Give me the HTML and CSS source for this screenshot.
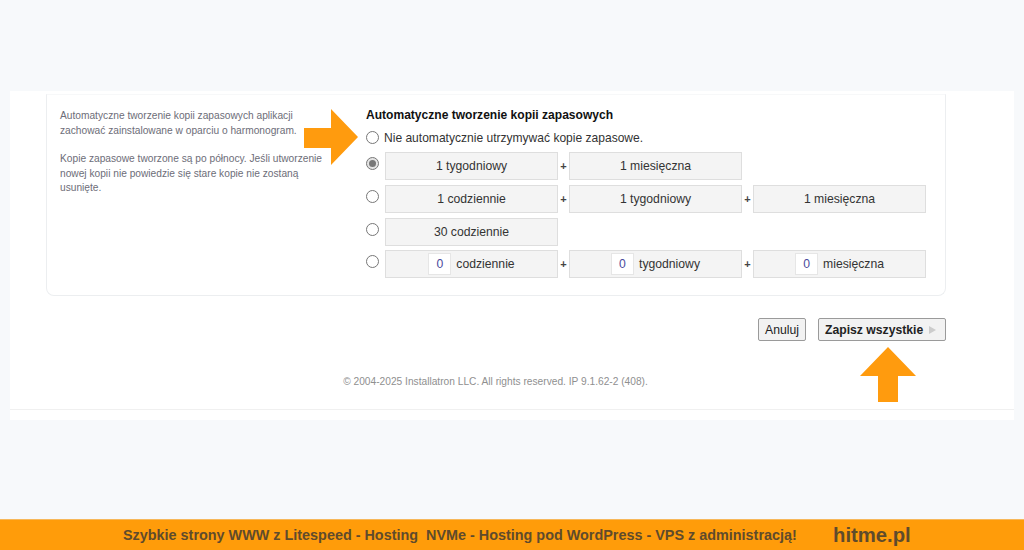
FILE: index.html
```html
<!DOCTYPE html>
<html lang="pl">
<head>
  <meta charset="UTF-8" />
  <meta name="viewport" content="width=device-width, initial-scale=1.0"/>
  <title>Automatyczne tworzenie kopii zapasowych</title>
  <link rel="stylesheet" href="styles.css">
</head>
<body>
  <div class="panel">
    <div class="card">
      <div class="help">
        <p>Automatyczne tworzenie kopii zapasowych aplikacji zachować zainstalowane w oparciu o harmonogram.</p>
        <p>Kopie zapasowe tworzone są po północy. Jeśli utworzenie nowej kopii nie powiedzie się stare kopie nie zostaną usunięte.</p>
      </div>
      <div class="options">
        <h2>Automatyczne tworzenie kopii zapasowych</h2>
        <label class="none-row"><span class="radio"></span> Nie automatycznie utrzymywać kopie zapasowe.</label>
        <div class="row">
          <span class="radio checked"></span>
          <div class="box">1 tygodniowy</div>
          <span class="plus">+</span>
          <div class="box">1 miesięczna</div>
        </div>
        <div class="row">
          <span class="radio"></span>
          <div class="box">1 codziennie</div>
          <span class="plus">+</span>
          <div class="box">1 tygodniowy</div>
          <span class="plus">+</span>
          <div class="box">1 miesięczna</div>
        </div>
        <div class="row">
          <span class="radio"></span>
          <div class="box">30 codziennie</div>
        </div>
        <div class="row">
          <span class="radio"></span>
          <div class="box"><span class="num">0</span> codziennie</div>
          <span class="plus">+</span>
          <div class="box"><span class="num">0</span> tygodniowy</div>
          <span class="plus">+</span>
          <div class="box"><span class="num">0</span> miesięczna</div>
        </div>
      </div>
    </div>
    <div class="actions">
      <button class="btn">Anuluj</button>
      <button class="btn save">Zapisz wszystkie <span class="tri"></span></button>
    </div>
    <div class="copy">© 2004-2025 Installatron LLC. All rights reserved. IP 9.1.62-2 (408).</div>
  </div>

  <!-- orange arrows drawn over the screenshot -->
  <svg class="arrow arrow-right" width="54" height="56" viewBox="0 0 54 56"><path d="M0 19H27V0L54 28 27 56V39H0Z" fill="#ff9b0e"/></svg>
  <svg class="arrow arrow-up" width="56" height="55" viewBox="0 0 56 55"><path d="M28 0 56 29H38V55H18V29H0Z" fill="#ff9b0e"/></svg>

  <div class="promo">
    <span class="promo-text">Szybkie strony WWW z Litespeed - Hosting&nbsp; NVMe - Hosting pod WordPress - VPS z administracją!</span>
    <span class="promo-brand">hitme.pl</span>
  </div>
</body>
</html>
```

FILE: styles.css
```css
html, body {
  margin: 0;
  height: 550px;
  overflow: hidden;
}
body {
  position: relative;
  display: flex;
  flex-direction: column;
  justify-content: space-between;
  background: #f7f9fb;
  font-family: "Liberation Sans", Arial, sans-serif;
  color: #222;
  padding-top: 91px;
  box-sizing: border-box;
}
.panel {
  margin: 0 10px;
  height: 329px;
  background: #fff;
  padding: 3px 68px 0 36px;
  box-sizing: border-box;
}
.card {
  height: 202px;
  border: 1px solid #eceef0;
  border-top-color: #f7f8f9;
  border-radius: 0 0 8px 8px;
  box-sizing: border-box;
  padding: 13px 13px 0 13px;
  display: flex;
}
.help {
  width: 306px;
  padding-top: 1px;
  font-size: 10.2px;
  line-height: 14.6px;
  color: #6d6d78;
}
.help p {
  margin: 0 0 14px;
  width: 270px;
}
.options h2 {
  margin: 0;
  font-size: 12.05px;
  line-height: 15px;
  color: #111;
}
.none-row {
  display: flex;
  align-items: center;
  gap: 5px;
  margin-top: 7px;
  font-size: 12.05px;
  height: 15px;
  color: #333;
}
.radio {
  flex: none;
  width: 11px;
  height: 11px;
  border: 1px solid #777;
  border-radius: 50%;
  background: #fff;
  position: relative;
}
.radio.checked {
  background: #e4e4e4;
}
.radio.checked::after {
  content: "";
  position: absolute;
  inset: 2px;
  border-radius: 50%;
  background: #777;
}
.row {
  display: flex;
  align-items: flex-start;
  margin-top: 5.8px;
  height: 27px;
}
.none-row + .row {
  margin-top: 7px;
}
.row .radio {
  margin: 5px 6px 0 0;
}
.box {
  width: 173px;
  height: 28px;
  box-sizing: border-box;
  background: #f4f4f4;
  border: 1px solid #dedede;
  display: flex;
  align-items: center;
  justify-content: center;
  gap: 5px;
  font-size: 12.2px;
  color: #333;
}
.plus {
  width: 11px;
  text-align: center;
  font-size: 11px;
  line-height: 28px;
  font-weight: bold;
  color: #444;
}
.num {
  width: 21px;
  height: 20px;
  line-height: 20px;
  text-align: center;
  background: #fff;
  border: 1px solid #e6e6e6;
  color: #4a4a9c;
}
.actions {
  display: flex;
  justify-content: flex-end;
  gap: 12px;
  margin-top: 22px;
}
.btn {
  height: 23px;
  padding: 0 6px;
  font-family: inherit;
  font-size: 12.2px;
  color: #222;
  background: #f2f2f2;
  border: 1px solid #9a9a9a;
  border-radius: 2px;
}
.save {
  width: 128px;
  font-weight: bold;
  font-size: 12.2px;
  text-align: left;
  display: flex;
  align-items: center;
  gap: 6px;
  white-space: nowrap;
}
.tri {
  width: 0;
  height: 0;
  border-left: 7px solid #ccc;
  border-top: 4px solid transparent;
  border-bottom: 4px solid transparent;
}
.copy {
  margin-top: 35px;
  padding-bottom: 21px;
  border-bottom: 1px solid #f0f0f0;
  margin-left: -36px;
  margin-right: -68px;
  padding-right: 33px;
  text-align: center;
  font-size: 10.2px;
  line-height: 12px;
  color: #8f8f8f;
}
.arrow {
  position: absolute;
}
.arrow-right {
  left: 304px;
  top: 109px;
}
.arrow-up {
  left: 860px;
  top: 347px;
}
.promo {
  height: 31px;
  background: #ff9c0a;
  border-top: 1px solid #f7b85a;
  box-sizing: border-box;
  display: flex;
  align-items: center;
  padding-left: 123px;
  color: #5f4b2c;
  font-weight: bold;
}
.promo-text {
  font-size: 14.4px;
  width: 710px;
  white-space: nowrap;
}
.promo-brand {
  font-size: 20.3px;
}
```
